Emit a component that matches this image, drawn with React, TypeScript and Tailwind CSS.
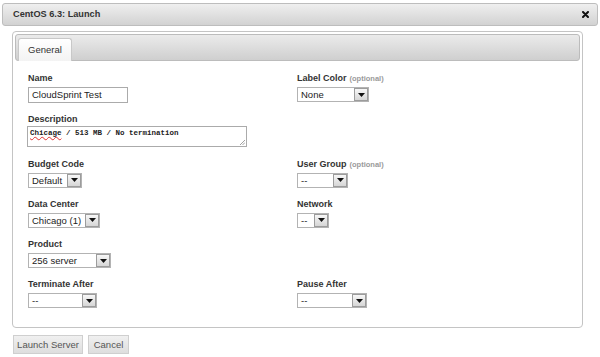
import React from 'react';

const font = { fontFamily: '"Liberation Sans", Arial, sans-serif' };

function Label({ text, optional }: { text: string; optional?: boolean }) {
    return (
        <div className="h-[11px] leading-[11px] text-[9px] font-bold text-[#333] mb-[3px] whitespace-nowrap">
            {text}
            {optional && <span className="ml-[3px] text-[7.5px] text-[#9a9a9a]">(optional)</span>}
        </div>
    );
}

function Select({ value, width }: { value: string; width: string }) {
    return (
        <div className={`${width} h-[15px] flex items-center border border-[#b3b3b3] bg-white mt-[1px]`}>
            <span className="flex-1 pl-[3px] text-[9.5px] leading-[13px] text-[#222] whitespace-nowrap overflow-hidden">{value}</span>
            <div className="w-[14px] h-[13px] flex items-center justify-center border border-[#9c9c9c] bg-gradient-to-b from-[#f7f7f7] to-[#d6d6d6]">
                <svg width="7" height="4" viewBox="0 0 7 4"><path d="M0 0H7L3.5 4Z" fill="#111" /></svg>
            </div>
        </div>
    );
}

export default function App() {
    return (
        <div className="w-[600px] h-[357px] bg-white overflow-hidden pt-[3px]" style={font}>
            {/* Dialog title bar */}
            <div className="mx-[2px] w-[596px] h-[23px] flex items-center justify-between rounded-[3px] border border-[#bdbdbd] bg-gradient-to-b from-[#efefef] to-[#d2d2d2] pl-[10px] pr-[8px]">
                <span className="text-[9.2px] font-bold text-[#333]">CentOS 6.3: Launch</span>
                <svg width="7" height="7" viewBox="0 0 7 7"><path d="M1 1L6 6M6 1L1 6" stroke="#111" strokeWidth="2" strokeLinecap="round" /></svg>
            </div>

            {/* Tab panel */}
            <div className="ml-[12px] mt-[5px] w-[571px] rounded-[4px] border border-[#c4c4c4] p-[2px] pb-[19px]">
                <div className="h-[27px] rounded-[3px] border border-[#bcbcbc] bg-gradient-to-b from-[#ebebeb] to-[#cfcfcf] flex items-end pl-[2px]">
                    <div className="w-[54px] h-[23px] -mb-[1px] rounded-t-[3px] border border-b-0 border-[#c8c8c8] bg-gradient-to-b from-white to-[#f3f3f3] flex items-center justify-center text-[9.5px] text-[#333]">
                        General
                    </div>
                </div>

                <div className="grid grid-cols-[269px_1fr] gap-y-[11.25px] pl-[13px] pt-[12px]">
                    <div>
                        <Label text="Name" />
                        <div className="w-[100px] h-[16px] border border-[#ababab] bg-white pl-[3px] text-[9.5px] leading-[14px] text-[#222]">CloudSprint Test</div>
                    </div>
                    <div>
                        <Label text="Label Color" optional />
                        <Select value="None" width="w-[72px]" />
                    </div>

                    <div>
                        <div className="h-[11px] leading-[11px] text-[9px] font-bold text-[#333] mb-[1px]">Description</div>
                        <div className="relative w-[220px] h-[21px] -ml-[1px] border border-[#ababab] bg-white pl-[2px] pt-[2px] text-[7.5px] leading-[9px] font-bold text-[#222]" style={{ fontFamily: '"Liberation Mono", "Courier New", monospace' }}>
                            <span className="underline decoration-wavy decoration-[#e03030] decoration-[1px] underline-offset-[1px]">Chicage</span> / 513 MB / No termination
                            <svg className="absolute right-[1px] bottom-[1px]" width="6" height="6" viewBox="0 0 6 6">
                                <path d="M6 1L1 6M6 3.5L3.5 6" stroke="#8a8a8a" strokeWidth="0.8" />
                            </svg>
                        </div>
                    </div>
                    <div />

                    <div>
                        <Label text="Budget Code" />
                        <Select value="Default" width="w-[54px]" />
                    </div>
                    <div>
                        <Label text="User Group" optional />
                        <Select value="--" width="w-[51px]" />
                    </div>

                    <div>
                        <Label text="Data Center" />
                        <Select value="Chicago (1)" width="w-[72px]" />
                    </div>
                    <div>
                        <Label text="Network" />
                        <Select value="--" width="w-[32px]" />
                    </div>

                    <div>
                        <Label text="Product" />
                        <Select value="256 server" width="w-[83px]" />
                    </div>
                    <div />

                    <div>
                        <Label text="Terminate After" />
                        <Select value="--" width="w-[69px]" />
                    </div>
                    <div>
                        <Label text="Pause After" />
                        <Select value="--" width="w-[70px]" />
                    </div>
                </div>
            </div>

            {/* Actions */}
            <div className="flex gap-[5px] ml-[13px] mt-[7px]">
                <button className="w-[70px] h-[19px] border border-[#cfcfcf] bg-gradient-to-b from-[#f0f0f0] to-[#dedede] text-[9.5px] text-[#555]">Launch Server</button>
                <button className="w-[41px] h-[19px] border border-[#cfcfcf] bg-gradient-to-b from-[#f0f0f0] to-[#dedede] text-[9.5px] text-[#555]">Cancel</button>
            </div>
        </div>
    );
}
